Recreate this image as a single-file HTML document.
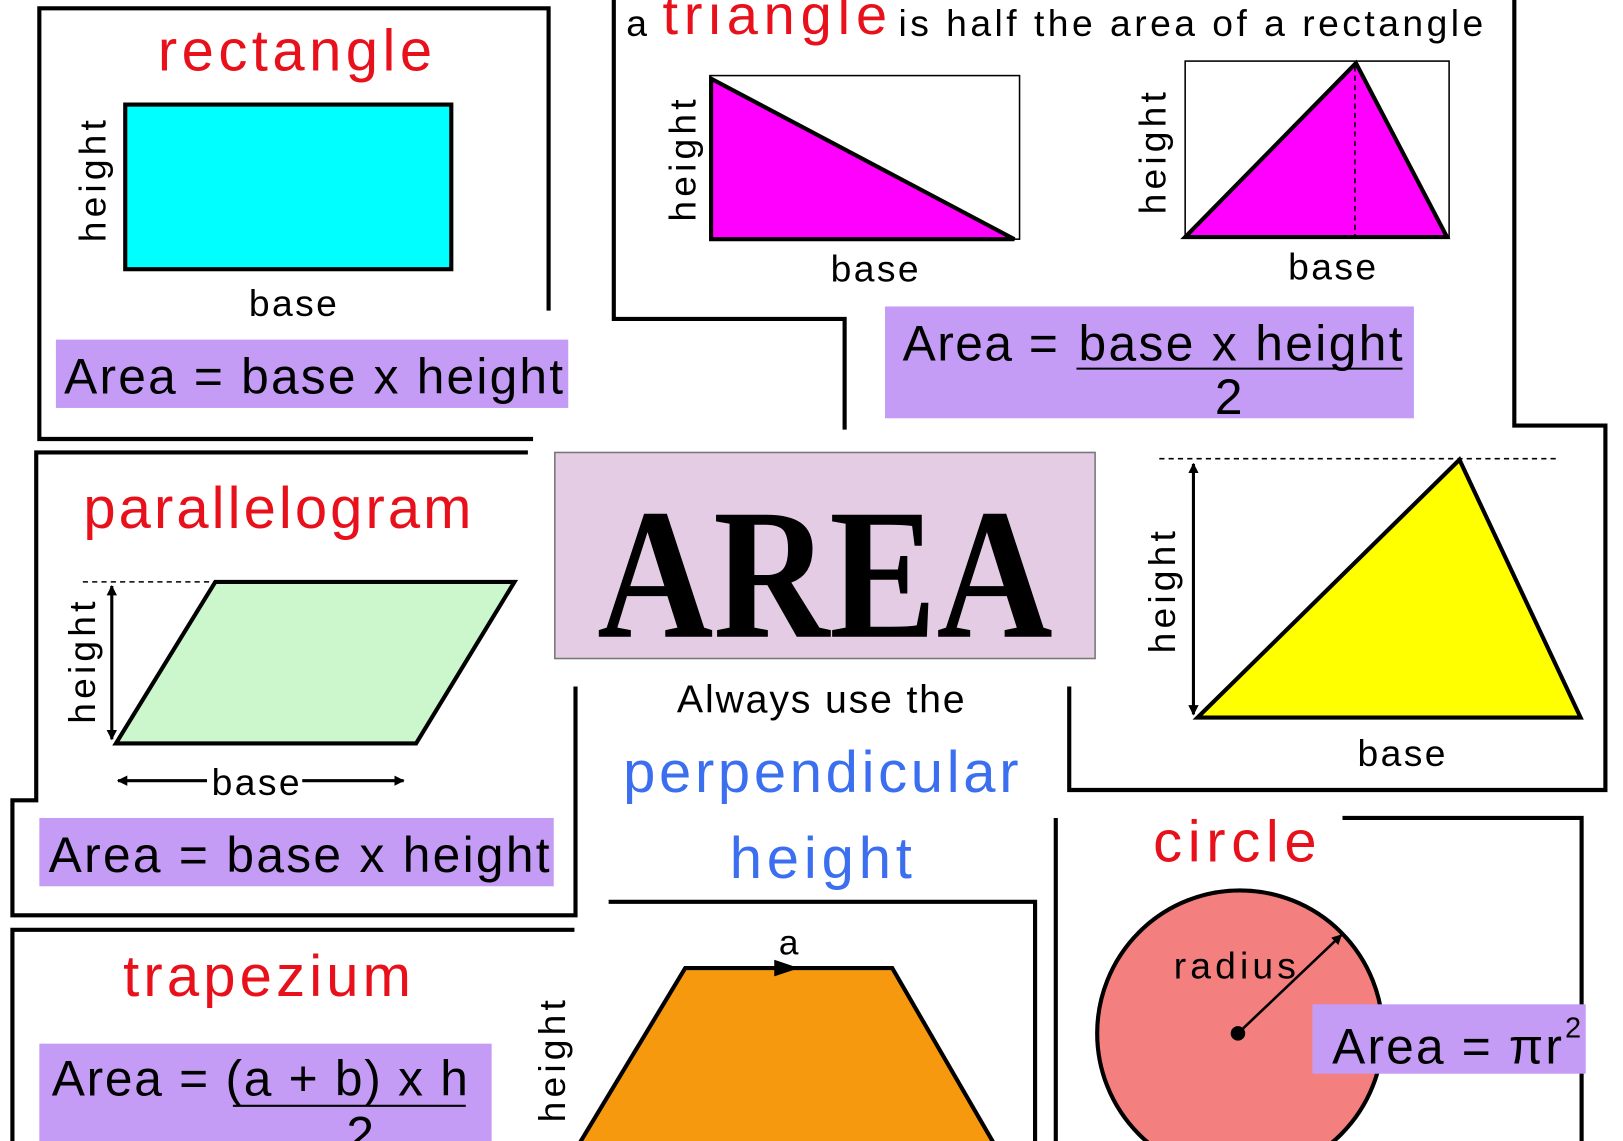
<!DOCTYPE html>
<html><head><style>html,body{margin:0;padding:0;background:#fff}svg{display:block}</style></head><body>
<svg width="1623" height="1141" viewBox="0 0 1568 1102" preserveAspectRatio="none" xmlns="http://www.w3.org/2000/svg" font-family="Liberation Sans, sans-serif">
<defs>
<marker id="ah" markerWidth="10" markerHeight="10" refX="9" refY="5" orient="auto" markerUnits="userSpaceOnUse"><path d="M0,0 L10,5 L0,10 z" fill="#000"/></marker>
<marker id="at" markerWidth="10" markerHeight="10" refX="1" refY="5" orient="auto" markerUnits="userSpaceOnUse"><path d="M10,0 L0,5 L10,10 z" fill="#000"/></marker>
</defs>
<rect width="1568" height="1102" fill="#fff"/>
<g fill="none" stroke="#000" stroke-width="4">
<polyline points="530,300 530,8 38,8 38,424 515,424"/>
<polyline points="510,437 35,437 35,773 12,773 12,884 556,884 556,663"/>
<polyline points="593,0 593,308 816,308 816,415"/>
<polyline points="1463,0 1463,411 1551,411 1551,763 1033,763 1033,663"/>
<polyline points="1020,790 1020,1102"/>
<polyline points="1297,790 1528,790 1528,1102"/>
<polyline points="12,1102 12,898 555,898"/>
<polyline points="588,871 1000,871 1000,1102"/>
</g>
<text x="285" y="68" font-size="56" fill="#e8101a" text-anchor="middle" textLength="265">rectangle</text>
<rect x="121" y="101" width="315" height="159" fill="#00ffff" stroke="#000" stroke-width="4"/>
<text transform="translate(102,175) rotate(-90)" font-size="36" text-anchor="middle" textLength="118">height</text>
<text x="283" y="305" font-size="36" text-anchor="middle" textLength="85">base</text>
<rect x="54" y="328" width="495" height="66" fill="#c59cf5"/>
<text x="62" y="380" font-size="48" textLength="482">Area = base x height</text>
<text x="605" y="35" font-size="36">a</text>
<text x="640" y="33" font-size="54" fill="#e8101a" textLength="217">triangle</text>
<text x="868" y="35" font-size="36" textLength="565">is half the area of a rectangle</text>
<rect x="686" y="73" width="299" height="158" fill="none" stroke="#000" stroke-width="1.5"/>
<polygon points="687,76 687,231 980,231" fill="#ff00ff" stroke="#000" stroke-width="4"/>
<text transform="translate(672,155) rotate(-90)" font-size="36" text-anchor="middle" textLength="118">height</text>
<text x="845" y="272" font-size="36" text-anchor="middle" textLength="85">base</text>
<rect x="1145" y="59" width="255" height="170" fill="none" stroke="#000" stroke-width="1.5"/>
<polygon points="1145,229 1310,61 1398,229" fill="#ff00ff" stroke="#000" stroke-width="4"/>
<line x1="1309" y1="64" x2="1309" y2="227" stroke="#000" stroke-width="1.5" stroke-dasharray="5,4"/>
<text transform="translate(1126,148) rotate(-90)" font-size="36" text-anchor="middle" textLength="118">height</text>
<text x="1287" y="270" font-size="36" text-anchor="middle" textLength="85">base</text>
<rect x="855" y="296" width="511" height="108" fill="#c59cf5"/>
<text x="872" y="348" font-size="48" textLength="150">Area =</text>
<text x="1042" y="348" font-size="48" textLength="313">base x height</text>
<line x1="1040" y1="356" x2="1355" y2="356" stroke="#000" stroke-width="2"/>
<text x="1187" y="400" font-size="48" text-anchor="middle">2</text>
<rect x="536" y="437" width="522" height="199" fill="#e4cde4" stroke="#777" stroke-width="1.5"/>
<text x="797" y="615" font-size="180" font-weight="bold" font-family="Liberation Serif, serif" text-anchor="middle" textLength="440" lengthAdjust="spacingAndGlyphs">AREA</text>
<text x="793" y="688" font-size="38" text-anchor="middle" textLength="278">Always use the</text>
<text x="793" y="765" font-size="56" fill="#3b6ff0" text-anchor="middle" textLength="382">perpendicular</text>
<text x="793" y="848" font-size="56" fill="#3b6ff0" text-anchor="middle" textLength="176">height</text>
<line x1="1120" y1="443" x2="1505" y2="443" stroke="#000" stroke-width="1.5" stroke-dasharray="5,4"/>
<polygon points="1157,693 1410,444 1527,693" fill="#ffff00" stroke="#000" stroke-width="4"/>
<line x1="1153" y1="448" x2="1153" y2="690" stroke="#000" stroke-width="3" marker-start="url(#at)" marker-end="url(#ah)"/>
<text transform="translate(1135,572) rotate(-90)" font-size="36" text-anchor="middle" textLength="118">height</text>
<text x="1354" y="740" font-size="36" text-anchor="middle" textLength="85">base</text>
<text x="268" y="510" font-size="56" fill="#e8101a" text-anchor="middle" textLength="375">parallelogram</text>
<line x1="80" y1="562" x2="208" y2="562" stroke="#000" stroke-width="1.5" stroke-dasharray="5,4"/>
<polygon points="112,718 208,562 497,562 402,718" fill="#ccf7cc" stroke="#000" stroke-width="4"/>
<line x1="108" y1="566" x2="108" y2="714" stroke="#000" stroke-width="3" marker-start="url(#at)" marker-end="url(#ah)"/>
<text transform="translate(92,640) rotate(-90)" font-size="36" text-anchor="middle" textLength="118">height</text>
<line x1="114" y1="754" x2="390" y2="754" stroke="#000" stroke-width="3" marker-start="url(#at)" marker-end="url(#ah)"/>
<rect x="200" y="738" width="92" height="34" fill="#fff"/>
<text x="247" y="768" font-size="36" text-anchor="middle" textLength="85">base</text>
<rect x="38" y="790" width="497" height="66" fill="#c59cf5"/>
<text x="47" y="842" font-size="48" textLength="484">Area = base x height</text>
<text x="258" y="962" font-size="56" fill="#e8101a" text-anchor="middle" textLength="278">trapezium</text>
<rect x="38" y="1008" width="437" height="94" fill="#c59cf5"/>
<text x="50" y="1058" font-size="48" textLength="402">Area = (a + b) x h</text>
<line x1="225" y1="1068" x2="450" y2="1068" stroke="#000" stroke-width="2"/>
<text x="348" y="1112" font-size="48" text-anchor="middle">2</text>
<polygon points="560,1104 662,935 862,935 960,1104" fill="#f7990e" stroke="#000" stroke-width="4"/>
<path d="M748,927 L772,935 L748,943 z" fill="#000"/>
<text x="762" y="922" font-size="34" text-anchor="middle">a</text>
<text transform="translate(546,1025) rotate(-90)" font-size="36" text-anchor="middle" textLength="118">height</text>
<text x="1193" y="832" font-size="56" fill="#e8101a" text-anchor="middle" textLength="158">circle</text>
<circle cx="1198" cy="998" r="138" fill="#f47f7f" stroke="#000" stroke-width="4"/>
<line x1="1196" y1="998" x2="1296" y2="903" stroke="#000" stroke-width="2.5" marker-end="url(#ah)"/>
<circle cx="1196" cy="998" r="7" fill="#000"/>
<text x="1193" y="945" font-size="36" text-anchor="middle" textLength="118">radius</text>
<rect x="1268" y="970" width="264" height="67" fill="#c59cf5"/>
<text x="1287" y="1027" font-size="48" textLength="222">Area = πr</text>
<text x="1512" y="1002" font-size="28">2</text>
</svg>
</body></html>
